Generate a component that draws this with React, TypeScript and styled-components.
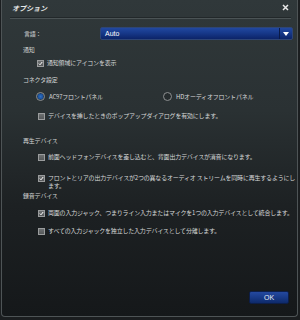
import React from "react";
import styled, { createGlobalStyle } from "styled-components";

const GlobalStyle = createGlobalStyle`
  html, body {
    margin: 0;
    padding: 0;
    background: #1b1e20;
  }
  body {
    width: 300px;
    height: 320px;
    overflow: hidden;
    font-family: "Noto Sans CJK JP", "Noto Sans", sans-serif;
  }
`;

type SectionType = {
  title: string;
  top: number;
  items: { label: React.ReactNode; checked: boolean; top: number; tall?: boolean }[];
};

const sections: SectionType[] = [
  {
    title: "再生デバイス",
    top: 17,
    items: [
      {
        label: "前面ヘッドフォンデバイスを差し込むと、背面出力デバイスが消音になります。",
        checked: false,
        top: 8,
      },
      {
        label: (
          <>
            フロントとリアの出力デバイスが2つの異なるオーディオ ストリームを同時に再生するようにし
            <br />
            ます。
          </>
        ),
        checked: true,
        top: 13,
        tall: true,
      },
    ],
  },
  {
    title: "録音デバイス",
    top: 2,
    items: [
      {
        label: "両面の入力ジャック、つまりライン入力またはマイクを1つの入力デバイスとして統合します。",
        checked: true,
        top: 9,
      },
      {
        label: "すべての入力ジャックを独立した入力デバイスとして分離します。",
        checked: false,
        top: 10,
      },
    ],
  },
];

function CheckBox({ checked }: { checked: boolean }) {
  return (
    <Box>
      {checked && (
        <svg width="7" height="7" viewBox="0 0 7 7">
          <path d="M1.2 3.6 L2.8 5.3 L5.9 1.4" stroke="#ffffff" strokeWidth="1.4" fill="none" />
        </svg>
      )}
    </Box>
  );
}

function App() {
  return (
    <>
      <GlobalStyle />
      <Dialog>
        <TitleBar>
          <Title>オプション</Title>
          <Close>
            <svg width="7" height="7" viewBox="0 0 7 7">
              <path d="M1 1 L6 6 M6 1 L1 6" stroke="#e8e8e8" strokeWidth="1.5" />
            </svg>
          </Close>
        </TitleBar>
        <Separator />

        <LangRow>
          <Label>言語：</Label>
          <Dropdown>
            <span>Auto</span>
            <DropArrow>
              <svg width="6" height="4" viewBox="0 0 6 4">
                <path d="M0 0 H6 L3 4 Z" fill="#ffffff" />
              </svg>
            </DropArrow>
          </Dropdown>
        </LangRow>

        <Heading $top={6}>通知</Heading>
        <CheckRow $top={5} $indent={36}>
          <CheckBox checked />
          <ItemText>通知領域にアイコンを表示</ItemText>
        </CheckRow>

        <Heading $top={9}>コネクタ設定</Heading>
        <RadioLine>
          <RadioItem>
            <Radio $on />
            <ItemText>AC97フロントパネル</ItemText>
          </RadioItem>
          <RadioItem>
            <Radio />
            <ItemText>HDオーディオフロントパネル</ItemText>
          </RadioItem>
        </RadioLine>
        <CheckRow $top={11} $indent={37}>
          <CheckBox checked={false} />
          <ItemText>デバイスを挿したときのポップアップダイアログを有効にします。</ItemText>
        </CheckRow>

        {sections.map((s) => (
          <React.Fragment key={s.title}>
            <Heading $top={s.top}>{s.title}</Heading>
            {s.items.map((it, i) => (
              <CheckRow key={i} $top={it.top} $indent={37} $tall={it.tall}>
                <CheckBox checked={it.checked} />
                <ItemText>{it.label}</ItemText>
              </CheckRow>
            ))}
          </React.Fragment>
        ))}

        <Footer>
          <OkButton>OK</OkButton>
        </Footer>
      </Dialog>
    </>
  );
}

export default App;

const Dialog = styled.div`
  margin-left: 1px;
  width: 295px;
  height: 316px;
  border: 1px solid #4e5456;
  border-top: none;
  border-radius: 0 0 4px 4px;
  background: linear-gradient(180deg, #30383a 0%, #2a3133 35%, #1d2123 65%, #15181a 100%);
  display: flex;
  flex-direction: column;
  color: #d6d8d8;
  font-size: 6px;
  letter-spacing: -0.2px;
  line-height: 8px;
`;

const TitleBar = styled.div`
  display: flex;
  align-items: center;
  height: 17px;
  padding: 0 8px 0 10px;
`;

const Title = styled.div`
  font-size: 7px;
  font-weight: 700;
  letter-spacing: 0;
  color: #e6e8e8;
  font-style: italic;
  transform: translateY(-1px);
`;

const Close = styled.div`
  margin-left: auto;
  display: flex;
  transform: translateY(-1px);
`;

const Separator = styled.div`
  height: 1px;
  margin: 0 6px 0 8px;
  background: #4b5355;
  border-top: 1px solid #22282a;
`;

const LangRow = styled.div`
  display: flex;
  align-items: center;
  margin-top: 8px;
  height: 13px;
  padding: 0 4px 0 22px;
`;

const Label = styled.div`
  color: #c8cacb;
`;

const Dropdown = styled.div`
  margin-left: auto;
  width: 193px;
  height: 13px;
  box-sizing: border-box;
  display: flex;
  align-items: center;
  padding-left: 4px;
  border: 1px solid #2e4575;
  border-radius: 2px;
  background: linear-gradient(180deg, #2148a0 0%, #17398a 45%, #0c2468 100%);
  color: #ffffff;
  font-family: "Liberation Sans", Arial, sans-serif;
  font-size: 7px;
  letter-spacing: 0;
`;

const DropArrow = styled.div`
  margin-left: auto;
  width: 12px;
  height: 100%;
  display: flex;
  align-items: center;
  justify-content: center;
  border-left: 1px solid #0a1a46;
`;

const Heading = styled.div<{ $top: number }>`
  margin-top: ${(p) => p.$top}px;
  padding-left: 21px;
  height: 8px;
  color: #d2d4d4;
`;

const CheckRow = styled.div<{ $top: number; $indent: number; $tall?: boolean }>`
  display: flex;
  align-items: flex-start;
  gap: 3px;
  margin-top: ${(p) => p.$top}px;
  padding-left: ${(p) => p.$indent - 1}px;
  height: ${(p) => (p.$tall ? 16 : 8)}px;
  white-space: nowrap;
`;

const Box = styled.div`
  width: 7px;
  height: 7px;
  margin-top: 1px;
  flex: none;
  box-sizing: border-box;
  border: 1px solid #9a9c9d;
  background: linear-gradient(180deg, #6d7071 0%, #55585a 100%);
  display: flex;
  align-items: center;
  justify-content: center;
`;

const ItemText = styled.span`
  color: #d6d8d8;
`;

const RadioLine = styled.div`
  display: grid;
  grid-template-columns: 127px 1fr;
  margin-top: 8px;
  padding-left: 34px;
  height: 9px;
`;

const RadioItem = styled.div`
  display: flex;
  align-items: center;
  gap: 4px;
  white-space: nowrap;
`;

const Radio = styled.div<{ $on?: boolean }>`
  width: 9px;
  height: 9px;
  flex: none;
  box-sizing: border-box;
  border-radius: 50%;
  border: 1px solid #8d9091;
  background: ${(p) =>
    p.$on ? "radial-gradient(circle, #2d6fc2 0%, #1a4f98 55%, #20272a 70%)" : "#262c2e"};
`;

const Footer = styled.div`
  margin-top: auto;
  display: flex;
  justify-content: flex-end;
  padding: 0 8px 12px 0;
`;

const OkButton = styled.button`
  width: 40px;
  height: 13px;
  border: 1px solid #0d1e48;
  border-radius: 2px;
  background: linear-gradient(180deg, #2449a0 0%, #183a88 50%, #0e2a6a 100%);
  color: #e8ecf4;
  font-family: "Liberation Sans", Arial, sans-serif;
  font-size: 7px;
  padding: 0;
`;
